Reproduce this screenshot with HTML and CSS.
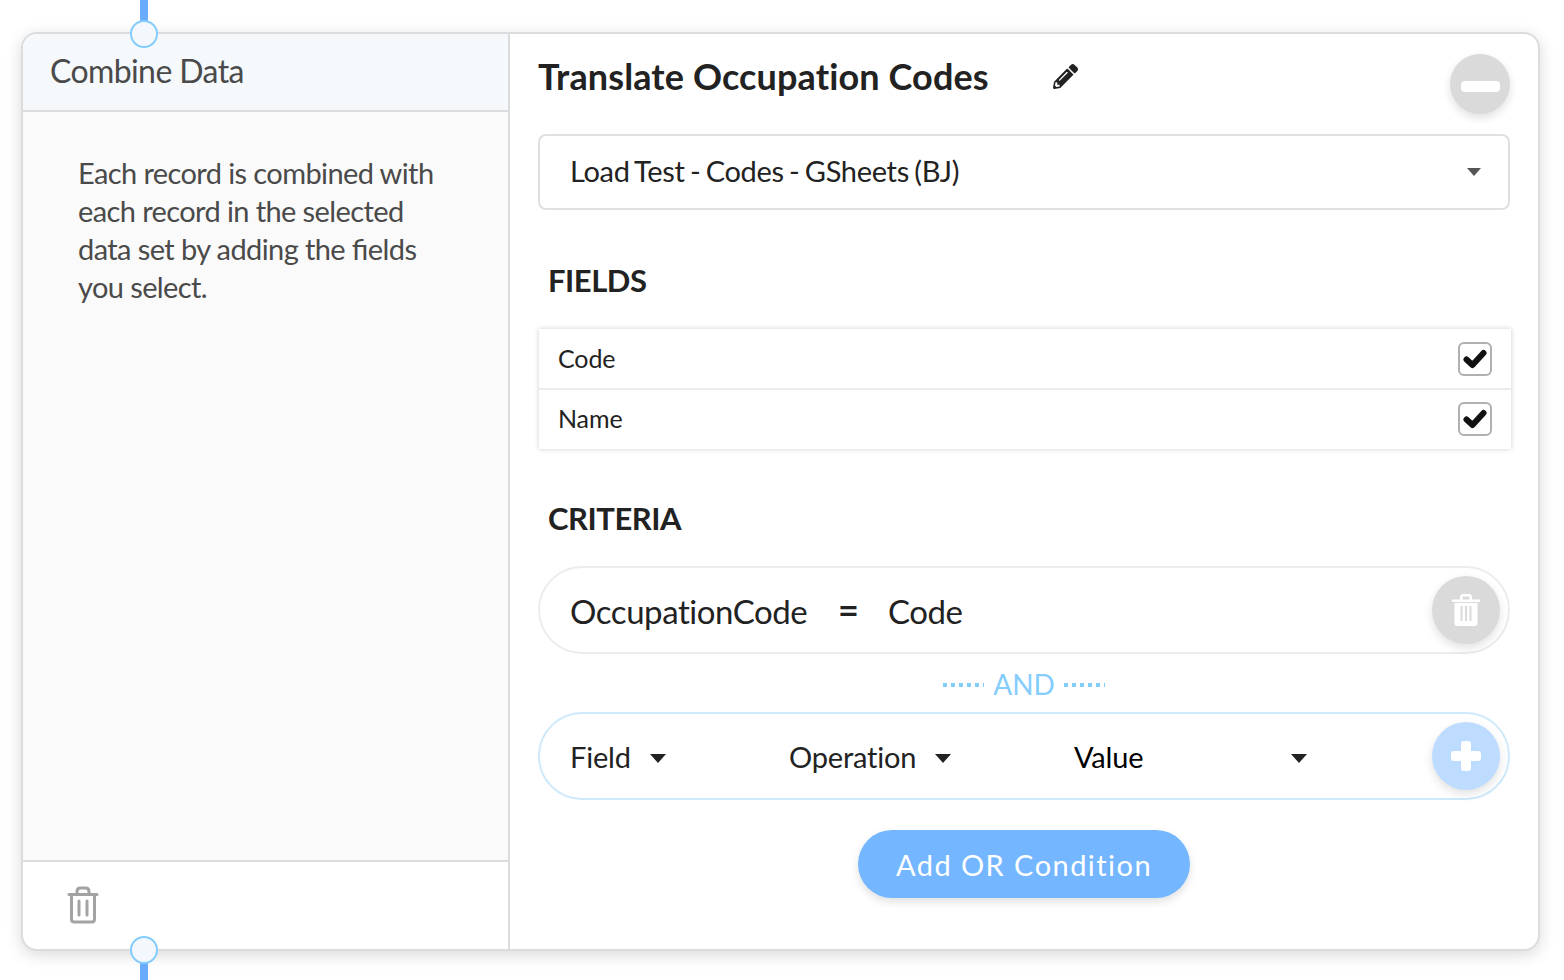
FILE: index.html
```html
<!DOCTYPE html>
<html lang="en">
<head>
<meta charset="utf-8">
<title>Combine Data</title>
<link rel="stylesheet" href="styles.css">
</head>
<body>
<div class="connector connector-top"></div>
<div class="port port-top"></div>
<main class="card">
  <aside class="side">
    <header class="side-head">Combine Data</header>
    <p class="side-body">Each record is combined with each record in the selected data set by adding the fields you select.</p>
    <footer class="side-foot">
      <svg class="trash-outline" width="32" height="38" viewBox="0 0 32 38" fill="none" stroke="#a3a3a3" stroke-width="3" stroke-linejoin="round" stroke-linecap="round">
        <path d="M2 8.500H30"/>
        <path d="M10 8V5.500Q10 2 13.500 2H18.500Q22 2 22 5.500V8"/>
        <path d="M4.500 9V33Q4.500 36 7 36H25Q27.500 36 27.500 33V9"/>
        <path d="M12 15V29M20 15V29"/>
      </svg>
    </footer>
  </aside>
  <section class="main">
    <div class="title-row">
      <h1 class="title">Translate Occupation Codes</h1>
      <svg class="pencil" width="25" height="25" viewBox="0 0 512 512">
        <path fill="#222" d="M497.900 142.100l-46.100 46.100c-4.700 4.700-12.300 4.700-17 0l-111-111c-4.700-4.700-4.700-12.300 0-17l46.100-46.100c18.700-18.700 49.100-18.700 67.900 0l60.100 60.100c18.800 18.700 18.800 49.100 0 67.900zM284.200 99.800L21.600 362.400.4 483.900c-2.900 16.400 11.400 30.600 27.800 27.800l121.500-21.300 262.600-262.600c4.700-4.700 4.700-12.300 0-17l-111-111c-4.800-4.700-12.400-4.700-17.100 0zM124.100 339.900c-5.500-5.500-5.500-14.300 0-19.800l154-154c5.500-5.500 14.300-5.500 19.800 0s5.500 14.300 0 19.800l-154 154c-5.500 5.500-14.300 5.500-19.800 0zM88 424h48v36.300l-64.500 11.300-31.100-31.100L51.700 376H88v48z"/>
      </svg>
      <button class="round grey minus" type="button"><span class="minus-bar"></span></button>
    </div>
    <div class="select">
      <span class="select-text">Load Test - Codes - GSheets (BJ)</span>
      <span class="caret caret-grey"></span>
    </div>
    <h2 class="section fields-label">FIELDS</h2>
    <ul class="fields">
      <li class="field"><span class="field-name">Code</span><span class="check"><svg width="24" height="20" viewBox="0 0 24 20"><path d="M3.500 10.500l6 5.500L20.500 4" fill="none" stroke="#111" stroke-width="6" stroke-linecap="round" stroke-linejoin="round"/></svg></span></li>
      <li class="field"><span class="field-name">Name</span><span class="check"><svg width="24" height="20" viewBox="0 0 24 20"><path d="M3.500 10.500l6 5.500L20.500 4" fill="none" stroke="#111" stroke-width="6" stroke-linecap="round" stroke-linejoin="round"/></svg></span></li>
    </ul>
    <h2 class="section criteria-label">CRITERIA</h2>
    <div class="pill pill-grey">
      <span class="crit-left">OccupationCode</span>
      <b class="crit-eq">=</b>
      <span class="crit-right">Code</span>
      <button class="round grey pill-btn" type="button">
        <svg width="30" height="34" viewBox="0 0 30 34" fill="#fff">
          <path d="M1 6.500H29V9H1z"/>
          <path d="M9 7V4Q9 1 12 1H18Q21 1 21 4V7H18.500V4.500Q18.500 3.500 17.500 3.500H12.500Q11.500 3.500 11.500 4.500V7z"/>
          <path fill-rule="evenodd" d="M3.500 10H26.500V30Q26.500 33 24 33H6Q3.500 33 3.500 30zM9.500 13V28H11.500V13zM14 13V28H16V13zM18.500 13V28H20.500V13z"/>
        </svg>
      </button>
    </div>
    <div class="and"><i class="dots"></i><span class="and-text">AND</span><i class="dots"></i></div>
    <div class="pill pill-blue">
      <span class="opt opt-field">Field<span class="caret"></span></span>
      <span class="opt opt-op">Operation<span class="caret"></span></span>
      <span class="opt opt-val">Value<span class="caret"></span></span>
      <button class="round blue pill-btn" type="button"><span class="plus"></span></button>
    </div>
    <div class="add-row"><button class="add-or" type="button">Add OR Condition</button></div>
  </section>
</main>
<div class="port port-bottom"></div>
<div class="connector connector-bottom"></div>
</body>
</html>
```
FILE: styles.css
```css
* { box-sizing: border-box; }
html, body { margin: 0; height: 980px; overflow: hidden; background: #fff; }
body { position: relative; padding: 32px 0 0 21px; font-family: Lato, "Open Sans", sans-serif; color: #222; }
.card { display: flex; width: 1519px; height: 919px; background: #fff; border: 2px solid #dcdcdc; border-radius: 16px; box-shadow: 0 4px 16px rgba(0,0,0,.15); overflow: hidden; }
.side { width: 487px; flex: none; display: flex; flex-direction: column; border-right: 2px solid #dcdcdc; }
.side-head { height: 78px; padding: 18px 0 0 27px; font-size: 32px; line-height: 38px; color: #4a4a4a; background: #f5f9fc; border-bottom: 2px solid #dcdcdc; letter-spacing: -.6px; }
.side-body { flex: 1; margin: 0; padding: 42px 60px 0 55px; font-size: 29px; line-height: 38px; color: #4a4a4a; background: #fafafa; letter-spacing: -.6px; font-feature-settings: "liga" 1; font-variant-ligatures: common-ligatures; }
.side-foot { height: 89px; padding: 24px 0 0 44px; border-top: 2px solid #dcdcdc; }
.trash-outline { display: block; }
.main { flex: 1; min-width: 0; padding: 0 28px 0 28px; }
.title-row { position: relative; height: 100px; display: flex; align-items: flex-start; }
.title { margin: 19px 0 0; font-size: 36px; line-height: 46px; font-weight: 700; color: #222; letter-spacing: .12px; }
.pencil { margin: 30px 0 0 64px; }
.round { border: 0; padding: 0; border-radius: 50%; display: flex; align-items: center; justify-content: center; box-shadow: 0 4px 10px rgba(0,0,0,.12); }
.grey { background: #dadada; }
.blue { background: #bedcff; }
.minus { position: absolute; right: 0; top: 20px; width: 60px; height: 60px; }
.minus-bar { width: 39px; height: 11px; border-radius: 4px; background: #fff; transform: translateY(2px); }
.select { display: flex; align-items: center; justify-content: space-between; height: 76px; padding: 0 27px 0 30px; border: 2px solid #e0e0e0; border-radius: 8px; font-size: 29px; color: #222; }
.select-text { letter-spacing: -.33px; word-spacing: -1.75px; transform: translateY(-2px); }
.caret { display: inline-block; width: 0; height: 0; border-left: 8.5px solid transparent; border-right: 8.500px solid transparent; border-top: 9px solid #222; transform: translateY(2px); }
.caret-grey { border-left-width: 7px; border-right-width: 7px; border-top: 8px solid #555; transform: none; }
.section { margin: 0; font-size: 31px; line-height: 40px; font-weight: 700; color: #222; padding-left: 10px; letter-spacing: -.45px; }
.fields-label { margin-top: 50px; }
.fields { list-style: none; margin: 29px 0 0 1px; padding: 0; width: 972px; background: #fff; box-shadow: 0 0 5px rgba(0,0,0,.2); }
.field { display: flex; align-items: center; justify-content: space-between; height: 59px; padding: 0 19px 0 19px; font-size: 25px; letter-spacing: -.1px; color: #222; }
.field + .field { height: 61px; padding-bottom: 2px; border-top: 2px solid #ececec; }
.field-name { transform: translateY(-1px); }
.check { width: 34px; height: 34px; border: 2px solid #b0b0b0; border-radius: 6px; display: flex; align-items: center; justify-content: center; background: #fff; }
.criteria-label { margin-top: 49px; }
.pill { position: relative; display: flex; align-items: center; height: 88px; padding-left: 30px; border-radius: 44px; }
.pill-grey { margin-top: 28px; border: 2px solid #ececec; font-size: 33px; letter-spacing: -.43px; color: #222; }
.crit-left { width: 268px; transform: translateY(1px); }
.crit-eq { width: 50px; font-size: 36px; font-weight: 700; line-height: 1; transform: translateY(-1px); }
.crit-right { transform: translateY(1px); }
.pill-blue { border: 2px solid #cde9fb; font-size: 29px; letter-spacing: -.2px; }
.pill-btn { position: absolute; right: 8px; top: 8px; width: 68px; height: 68px; }
.and { display: flex; align-items: center; justify-content: center; gap: 9px; height: 58px; font-size: 28px; letter-spacing: -.1px; color: #85cdfd; }
.and-text { transform: translateY(1px); }
.dots { width: 41px; height: 4px; background: repeating-linear-gradient(90deg, #85cdfd 0 4px, transparent 4px 8px); transform: translateY(2px); }
.opt { display: inline-flex; align-items: center; }
.opt .caret { margin-left: 19px; }
.opt-field { width: 219px; color: #222; }
.opt-op { width: 285px; color: #222; }
.opt-val { width: 236px; color: #000; }
.opt-val .caret { margin-left: 148px; }
.plus { position: relative; width: 30px; height: 30px; }
.plus::before, .plus::after { content: ""; position: absolute; background: #fff; border-radius: 3px; }
.plus::before { left: 0; right: 0; top: 10px; height: 10px; }
.plus::after { top: 0; bottom: 0; left: 10px; width: 10px; }
.add-row { display: flex; justify-content: center; margin-top: 30px; }
.add-or { width: 332px; height: 68px; border: 0; border-radius: 34px; background: #74b6ff; color: #fff; font-family: inherit; font-size: 29px; letter-spacing: 1.45px; box-shadow: 0 4px 8px rgba(0,0,0,.12); }
.connector { position: absolute; left: 140px; width: 8px; background: #6aaaff; }
.connector-top { top: 0; height: 22px; }
.connector-bottom { top: 962px; height: 18px; }
.port { position: absolute; left: 130px; width: 28px; height: 28px; border-radius: 50%; background: #f4f8fc; border: 2px solid #84ccfd; z-index: 2; }
.port-top { top: 20px; }
.port-bottom { top: 936px; }
```
